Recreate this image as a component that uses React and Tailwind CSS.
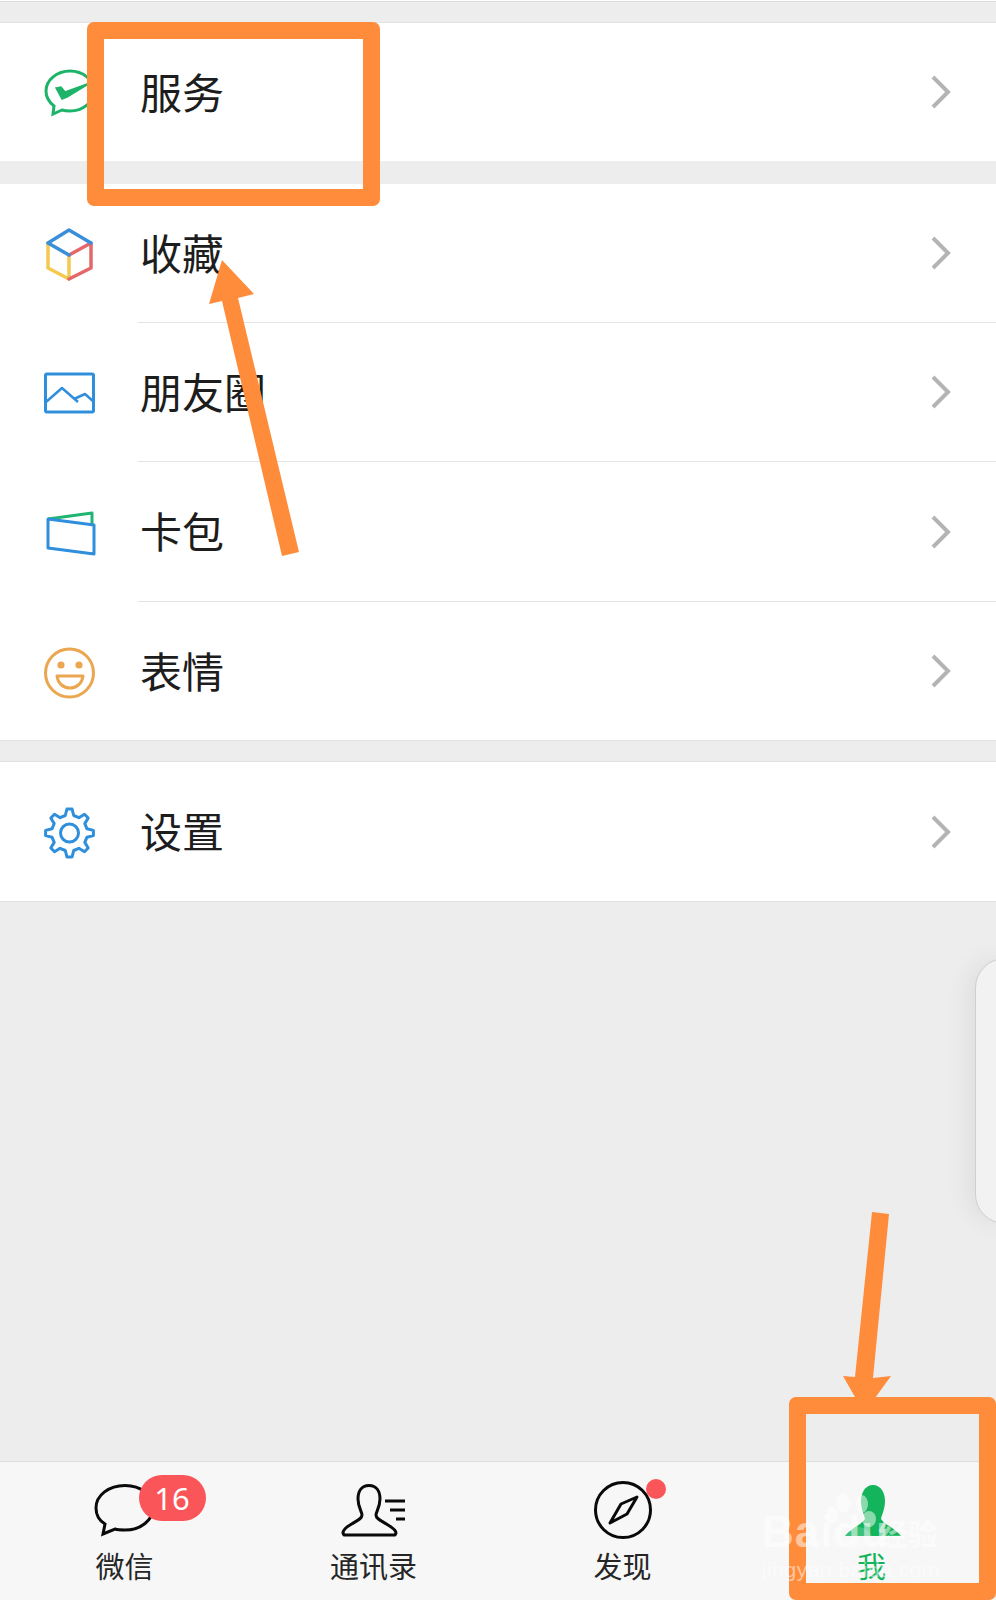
const CJK = { fontFamily: '"Noto Sans CJK SC", "Noto Sans", sans-serif' };

function Chevron() {
  return (
    <svg width="20" height="36" viewBox="0 0 20 36" fill="none" className="shrink-0">
      <path d="M2 3 L17 18 L2 33" stroke="#b4b4b4" strokeWidth="4" />
    </svg>
  );
}

function IconBox({ cy, children }) {
  return (
    <svg width="60" height="60" viewBox={`40 ${cy - 30} 60 60`} fill="none" className="shrink-0">
      {children}
    </svg>
  );
}

const ServiceIcon = (
  <IconBox cy={92}>
    <path d="M70 71 C57 71 46 80 46 91 C46 97 49 102 54 106 L53 114 L62 110 C65 111 67 111 70 111 C83 111 94 102 94 91 C94 80 83 71 70 71 Z" stroke="#1db46a" strokeWidth="3" />
    <path d="M56 88 L62 99 L67 97 L90 83 L65 92 L61 87 Z" fill="#1db46a" stroke="#1db46a" strokeWidth="1.5" />
  </IconBox>
);

const CubeIcon = (
  <IconBox cy={253}>
    <g strokeWidth="3.5" strokeLinecap="round" strokeLinejoin="round">
      <path d="M48 243 L48 268 L69 279 L69 255" stroke="#f3c94f" />
      <path d="M69 255 L91 243 L91 268 L69 279" stroke="#e4686a" />
      <path d="M48 243 L69 230 L91 243 M48 243 L69 255" stroke="#3a8fd9" />
    </g>
  </IconBox>
);

const PictureIcon = (
  <IconBox cy={392}>
    <rect x="45.5" y="374" width="48" height="38" rx="1.5" stroke="#2f8fdc" strokeWidth="3" />
    <path d="M46 402 L62 388 L78 402 M74 399 L85 394 L94 402" stroke="#2f8fdc" strokeWidth="2.5" strokeLinejoin="round" />
  </IconBox>
);

const WalletIcon = (
  <IconBox cy={531}>
    <path d="M48 518 L92 512 L92 524" stroke="#21b573" strokeWidth="3" strokeLinejoin="round" />
    <path d="M48 518 L94 524 L94 553 L48 547 Z" stroke="#2f8fdc" strokeWidth="3" strokeLinejoin="round" />
  </IconBox>
);

const SmileIcon = (
  <IconBox cy={670}>
    <circle cx="69.5" cy="672" r="24" stroke="#eba650" strokeWidth="3" />
    <circle cx="61" cy="664" r="3.6" fill="#eba650" />
    <circle cx="79" cy="664" r="3.6" fill="#eba650" />
    <path d="M57 675 L83 675 C82 683 76 687 70 687 C64 687 58 683 57 675 Z" stroke="#eba650" strokeWidth="3" strokeLinejoin="round" />
  </IconBox>
);

function gearPath(cx, cy, outer, inner, teeth) {
  const pts = [];
  const step = (Math.PI * 2) / teeth;
  for (let i = 0; i < teeth; i++) {
    const a = -Math.PI / 2 + i * step;
    const list = [
      [inner, a - step * 0.3],
      [outer, a - step * 0.14],
      [outer, a + step * 0.14],
      [inner, a + step * 0.3],
    ];
    list.forEach(([r, t]) => pts.push(`${(cx + r * Math.cos(t)).toFixed(1)} ${(cy + r * Math.sin(t)).toFixed(1)}`));
  }
  return `M${pts.join(" L")} Z`;
}

const GearIcon = (
  <IconBox cy={831}>
    <path d={gearPath(69.5, 832, 24, 18, 8)} stroke="#2f8fdc" strokeWidth="3" strokeLinejoin="round" />
    <circle cx="69.5" cy="832" r="9" stroke="#2f8fdc" strokeWidth="3" />
  </IconBox>
);

function Row({ icon, label, tall }) {
  return (
    <div className={`flex items-center bg-white pl-[40px] pr-[45px] ${tall ? "h-[139px]" : "h-[138px]"}`}>
      {icon}
      <div className="ml-[40px] flex-1 pb-[3px] text-[42px] leading-none text-[#1d1d1d]" style={CJK}>{label}</div>
      <Chevron />
    </div>
  );
}

function Divider() {
  return (
    <div className="bg-white pl-[138px]">
      <div className="h-px bg-[#e4e4e4]" />
    </div>
  );
}

function Tab({ label, active, children }) {
  return (
    <div className="flex flex-col items-center">
      <div className="relative h-[54px] w-[70px]">{children}</div>
      <div className={`mt-[10px] text-[29px] leading-[34px] ${active ? "text-[#14b45c]" : "text-[#262626]"}`} style={CJK}>{label}</div>
    </div>
  );
}

export default function App() {
  return (
    <div className="relative flex h-[1600px] w-[996px] flex-col overflow-hidden bg-[#ededed]" style={CJK}>
      <div className="h-[2px] border-b border-[#dcdcdc] bg-white" />
      <div className="h-[21px] border-b border-[#e2e2e2]" />
      <Row icon={ServiceIcon} label="服务" />
      <div className="h-[23px]" />
      <Row icon={CubeIcon} label="收藏" />
      <Divider />
      <Row icon={PictureIcon} label="朋友圈" />
      <Divider />
      <Row icon={WalletIcon} label="卡包" tall />
      <Divider />
      <Row icon={SmileIcon} label="表情" />
      <div className="h-px bg-[#e2e2e2]" />
      <div className="h-[21px] border-b border-[#e2e2e2]" />
      <Row icon={GearIcon} label="设置" tall />
      <div className="h-px bg-[#e2e2e2]" />
      <div className="flex-1" />

      <div className="grid h-[139px] grid-cols-4 border-t border-[#dedede] bg-[#f7f7f7] pt-[22px]">
        <Tab label="微信">
          <svg width="70" height="54" viewBox="0 0 70 54" fill="none" className="absolute left-0 top-0">
            <path d="M35 1.5 C19 1.5 6 11 6 24 C6 31 10 37 15 40 L13 50 L25 45 C28 46 31 46 35 46 C51 46 63 36 63 24 C63 11 51 1.5 35 1.5 Z" stroke="#0a0a0a" strokeWidth="3" />
          </svg>
          <div className="absolute left-[49px] top-[-9px] flex h-[46px] w-[67px] items-center justify-center rounded-full bg-[#fa5558] text-[31px] leading-none text-white" style={{ fontFamily: '"Noto Sans", sans-serif' }}>16</div>
        </Tab>
        <Tab label="通讯录">
          <svg width="70" height="54" viewBox="339 1484 70 54" fill="none" className="absolute left-0 top-0">
            <path d="M369 1485.5 C361 1485.5 358 1492 358 1499 C358 1507 362 1512 362 1515 C362 1519 356 1521 350 1525 C345 1528 343 1531 343 1533 L344 1535 L395 1535 L396 1533 C396 1531 393 1528 388 1525 C382 1521 376 1519 376 1515 C376 1512 380 1507 380 1499 C380 1492 377 1485.5 369 1485.5 Z" stroke="#0a0a0a" strokeWidth="3" strokeLinejoin="round" />
            <path d="M385 1501 H405 M390 1510 H405 M396 1519 H405" stroke="#0a0a0a" strokeWidth="3" />
          </svg>
        </Tab>
        <Tab label="发现">
          <svg width="70" height="54" viewBox="587 1484 70 54" fill="none" className="absolute left-0 top-0 overflow-visible">
            <circle cx="622" cy="1510" r="27.5" stroke="#0a0a0a" strokeWidth="3" />
            <path d="M636 1497 L620 1504 L609 1523 L626 1514 Z" stroke="#0a0a0a" strokeWidth="3" strokeLinejoin="round" />
          </svg>
          <div className="absolute left-[58px] top-[-5px] h-[20px] w-[20px] rounded-full bg-[#fa5558]" />
        </Tab>
        <Tab label="我" active>
          <svg width="70" height="54" viewBox="836 1484 70 54" className="absolute left-0 top-0">
            <path d="M872 1485 C864 1485 860 1493 860 1501 C860 1509 863 1514 864 1519 C859 1526 850 1528 844 1536 L900 1536 C894 1528 885 1526 880 1519 C881 1514 884 1509 884 1501 C884 1493 880 1485 872 1485 Z" fill="#14b45c" />
          </svg>
        </Tab>
      </div>

      {/* floating side panel */}
      <div className="absolute left-[975px] top-[958px] h-[266px] w-[40px] rounded-l-[30px] border border-[#cfcfcf] bg-[#f2f2f2] shadow-[-8px_0_24px_rgba(0,0,0,0.06)]" />

      {/* annotations */}
      <div className="absolute left-[87px] top-[22px] h-[184px] w-[293px] rounded-[7px] border-[17px] border-[#ff8c3b]" />
      <div className="absolute left-[789px] top-[1397px] h-[203px] w-[207px] rounded-[7px] border-[17px] border-[#ff8c3b]" />
      <svg width="996" height="1600" viewBox="0 0 996 1600" className="pointer-events-none absolute left-0 top-0">
        <polygon points="222,260 254,294 238,298 299,552 282,556 222,301 209,304" fill="#ff8c3b" />
        <polygon points="872,1212 889,1214 873,1378 891,1376 864,1413 843,1376 855,1377" fill="#ff8c3b" />
      </svg>

      {/* watermark */}
      <div className="pointer-events-none absolute left-[762px] top-[1490px] h-[100px] w-[190px] text-white/50">
        <svg width="80" height="62" viewBox="0 0 80 62" className="absolute left-[50px] top-[2px]" fill="currentColor">
          <ellipse cx="31" cy="11" rx="7" ry="10" />
          <ellipse cx="20" cy="23" rx="6" ry="9" />
          <ellipse cx="50" cy="12" rx="6" ry="9" />
          <ellipse cx="57" cy="27" rx="7" ry="8" />
          <ellipse cx="40" cy="46" rx="20" ry="12" opacity="0.35" />
        </svg>
        <div className="absolute left-0 top-[20px] text-[44px] font-bold leading-[44px] tracking-[1px]" style={{ fontFamily: '"Liberation Sans", sans-serif' }}>Baidu</div>
        <div className="absolute left-[116px] top-[24px] text-[30px] font-bold leading-[36px]" style={CJK}>经验</div>
        <div className="absolute left-0 top-[67px] text-[21px] leading-[26px] tracking-[0.5px]" style={{ fontFamily: '"Liberation Sans", sans-serif' }}>jingyan.baidu.com</div>
      </div>
    </div>
  );
}
